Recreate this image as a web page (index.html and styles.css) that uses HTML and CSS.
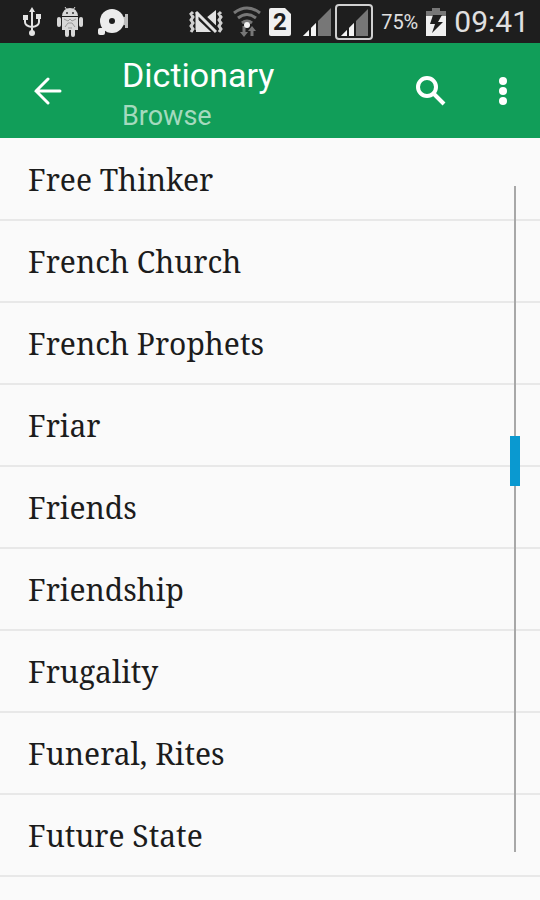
FILE: index.html
```html
<!DOCTYPE html>
<html lang="en">
<head>
    <meta charset="UTF-8">
    <meta name="viewport" content="width=device-width, initial-scale=1.0">
    <title>Dictionary</title>
    <link rel="stylesheet" href="styles.css">
</head>
<body>
    <div class="status">
        <div class="status-left">
            <svg width="20" height="32" viewBox="0 0 20 32" fill="none" stroke="#e4e4e4" stroke-width="2">
                <path d="M10 5v22M3 12v4q0 4 7 5q7-1 7-5v-5"/>
                <path d="M10 1l3 5H7z M1 9h5v5H1z M14 8h5v5h-5z" fill="#e4e4e4" stroke="none"/>
                <circle cx="10" cy="27" r="3" fill="#e4e4e4" stroke="none"/>
            </svg>
            <svg width="26" height="32" viewBox="0 0 26 32" fill="#d8d8d8">
                <path d="M5 10q1-8 8-8t8 8z M5 11h16v13H5z"/>
                <path d="M8 1l2 3M18 1l-2 3" stroke="#d8d8d8"/>
                <rect x="0" y="11" width="4" height="10" rx="2"/>
                <rect x="22" y="11" width="4" height="10" rx="2"/>
                <rect x="8" y="22" width="4" height="9" rx="2"/>
                <rect x="14" y="22" width="4" height="9" rx="2"/>
                <path d="M7 13l4 2 2-2 2 2 4-2M8 21l3-4h4l3 4M11 22h4" fill="none" stroke="#999"/>
                <circle cx="10" cy="7" r="1" fill="#333"/>
                <circle cx="16" cy="7" r="1" fill="#333"/>
            </svg>
            <svg width="30" height="32" viewBox="0 0 30 32" fill="#ececec">
                <path d="M22 10l5 1V8h3v14h-3v-3l-5 1z" fill="#bdbdbd"/>
                <circle cx="14" cy="15" r="12"/>
                <circle cx="14" cy="15" r="3" fill="#1e1e1e"/>
                <rect x="0" y="22" width="7" height="7" rx="2"/>
            </svg>
        </div>
        <div class="status-right">
            <svg width="36" height="32" viewBox="0 0 36 32" fill="none">
                <path d="M7 12h10l10-8v22H7z" fill="#e2e2e2"/>
                <path d="M7 6l21 20" stroke="#1e1e1e" stroke-width="8"/>
                <path d="M8 6v18M7 6l20 20" stroke="#e2e2e2" stroke-width="3"/>
                <path d="M4 6l-2 2 2 3-2 3 2 3-2 3 2 3-2 3M32 6l-2 2 2 3-2 3 2 3-2 3 2 3-2 3" stroke="#d0d0d0" stroke-width="3"/>
            </svg>
            <svg width="28" height="32" viewBox="0 0 28 32" fill="none" stroke="#777" stroke-width="3">
                <path d="M1 7q13-10 26 0M5 12q9-7 18 0M9 17q5-4 10 0"/>
                <path d="M11 20v7M19 30v-7"/>
                <path d="M7 26h8l-4 5zM15 25h8l-4-5z" fill="#777" stroke="none"/>
                <circle cx="14" cy="19" r="3" fill="#f4f4f4" stroke="none"/>
            </svg>
            <svg class="sim" width="22" height="28" viewBox="0 0 22 28">
                <path d="M2 0h14l6 6v20q0 2-2 2H2q-2 0-2-2V2q0-2 2-2z" fill="#f0f0f0"/>
                <text x="11" y="22" text-anchor="middle">2</text>
            </svg>
            <svg class="signal" width="28" height="28" viewBox="0 0 28 28">
                <path d="M0 28L28 0v28z" fill="#777"/>
                <path d="M0 28l14-14v14z" fill="#f4f4f4"/>
                <path d="M7 28v-9M14 28V12" stroke="#1e1e1e" stroke-width="2"/>
            </svg>
            <svg width="38" height="36" viewBox="0 0 38 36">
                <rect x="1" y="1" width="36" height="34" rx="3" fill="none" stroke="#d0d0d0" stroke-width="2"/>
                <path d="M6 32L33 5v27z" fill="#777"/>
                <path d="M6 32l14-14v14z" fill="#f4f4f4"/>
                <path d="M13 32v-9M20 32V16" stroke="#1e1e1e" stroke-width="2"/>
            </svg>
            <span class="percent">75%</span>
            <svg width="20" height="28" viewBox="0 0 20 28">
                <path d="M6 0h8v3h6v6H0V3h6z" fill="#777"/>
                <path d="M0 8h20v20H0z" fill="#f0f0f0"/>
                <path d="M7 7h9l-4 7h5L6 25l3-9H4z" fill="#1e1e1e"/>
            </svg>
            <span class="clock">09:41</span>
        </div>
    </div>
    <header class="toolbar">
        <button class="icon-button" aria-label="Back">
            <svg width="28" height="28" viewBox="0 0 28 28" fill="none" stroke="#fff" stroke-width="3" stroke-linecap="round">
                <path d="M26 14H2M14 2L2 14l12 12"/>
            </svg>
        </button>
        <div class="titles">
            <h1>Dictionary</h1>
            <p>Browse</p>
        </div>
        <button class="icon-button" aria-label="Search">
            <svg width="30" height="30" viewBox="0 0 30 30" fill="none" stroke="#fff">
                <circle cx="11" cy="11" r="9" stroke-width="4"/>
                <path d="M17 17l11 11" stroke-width="4"/>
            </svg>
        </button>
        <button class="icon-button more" aria-label="More options">
            <svg width="8" height="28" viewBox="0 0 8 28" fill="#fff">
                <circle cx="4" cy="4" r="4"/>
                <circle cx="4" cy="14" r="4"/>
                <circle cx="4" cy="24" r="4"/>
            </svg>
        </button>
    </header>
    <main class="browse">
        <ul class="words">
            <li><a href="#">Free Thinker</a></li>
            <li><a href="#">French Church</a></li>
            <li><a href="#">French Prophets</a></li>
            <li><a href="#">Friar</a></li>
            <li><a href="#">Friends</a></li>
            <li><a href="#">Friendship</a></li>
            <li><a href="#">Frugality</a></li>
            <li><a href="#">Funeral, Rites</a></li>
            <li><a href="#">Future State</a></li>
        </ul>
        <input class="scroller" type="range" min="0" max="1000" value="406" aria-label="Scroll position">
    </main>
</body>
</html>
```
FILE: styles.css
```css
* {
    margin: 0;
    padding: 0;
    box-sizing: border-box;
}
body {
    display: flex;
    flex-direction: column;
    min-height: 100vh;
    background-color: #fafafa;
    font-family: Roboto, "Liberation Sans", sans-serif;
}
svg {
    display: block;
    flex: none;
}
.status {
    display: flex;
    justify-content: space-between;
    align-items: center;
    height: 43px;
    padding: 0 11px 0 22px;
    background-color: #1e1e1e;
    color: #e0e0e0;
}
.status-left {
    display: flex;
    align-items: center;
    gap: 15px;
}
.status-right {
    display: flex;
    align-items: center;
    gap: 8px;
}
.sim text {
    font-size: 24px;
    font-weight: bold;
    fill: #1e1e1e;
}
.signal {
    margin-left: 4px;
    margin-right: -4px;
}
.percent {
    font-size: 20px;
}
.clock {
    font-size: 30px;
    line-height: 40px;
}
.toolbar {
    display: flex;
    align-items: center;
    height: 95px;
    padding: 0 17px 0 24px;
    background-color: #119e59;
    color: #fff;
}
.icon-button {
    display: flex;
    align-items: center;
    justify-content: center;
    width: 48px;
    height: 48px;
    border: 0;
    background: none;
    cursor: pointer;
}
.titles {
    flex: 1;
    margin-left: 50px;
    padding-top: 6px;
}
.titles h1 {
    font-size: 34px;
    font-weight: normal;
    line-height: 44px;
}
.titles p {
    color: #a4dabe;
    font-size: 27px;
    line-height: 38px;
}
.more {
    width: 40px;
    margin-left: 28px;
}
.browse {
    flex: 1;
    position: relative;
}
.words {
    padding-top: 1px;
    list-style: none;
}
.words a {
    display: flex;
    align-items: center;
    height: 82px;
    padding: 0 28px;
    border-bottom: 2px solid #e8e8e8;
    color: #1c1c1c;
    font-family: "Noto Serif", "Droid Serif", "Liberation Serif", serif;
    font-size: 30px;
    text-decoration: none;
}
/* fast scroller over the list */
.scroller {
    position: absolute;
    top: 48px;
    right: 20px;
    bottom: 48px;
    width: 10px;
    appearance: none;
    writing-mode: vertical-lr;
    background: linear-gradient(#a8a8a8, #a8a8a8) center / 2px 100% no-repeat;
    cursor: pointer;
}
.scroller::-webkit-slider-thumb {
    appearance: none;
    width: 10px;
    height: 50px;
    background-color: #0a99d0;
}
```
